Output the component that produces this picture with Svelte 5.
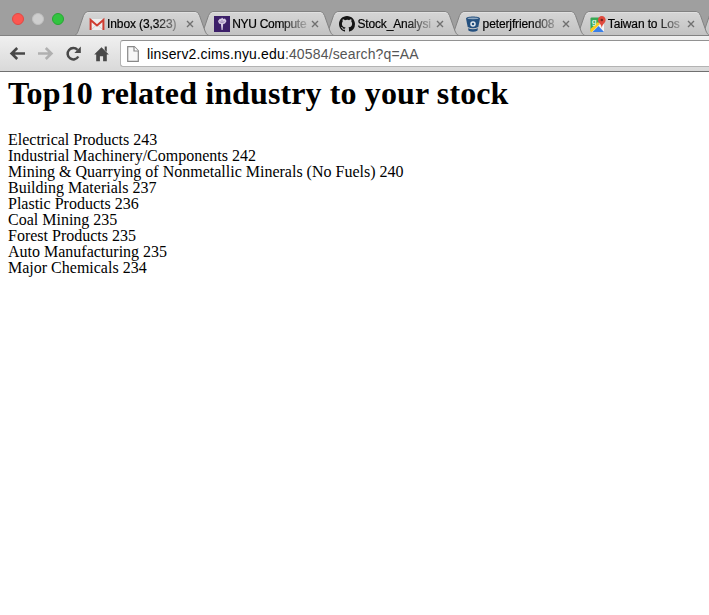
<script>
  const tabs = [
    { title: 'Inbox (3,323)', icon: 'gmail', spacing: -0.1 },
    { title: 'NYU Compute', icon: 'nyu', spacing: -0.3 },
    { title: 'Stock_Analysi', icon: 'github', spacing: -0.15 },
    { title: 'peterjfriend08', icon: 'bucket', spacing: -0.12 },
    { title: 'Taiwan to Los', icon: 'maps', spacing: -0.12 },
    { title: '', icon: '', spacing: 0 }
  ];
  const industries = [
    ['Electrical Products', 243],
    ['Industrial Machinery/Components', 242],
    ['Mining & Quarrying of Nonmetallic Minerals (No Fuels)', 240],
    ['Building Materials', 237],
    ['Plastic Products', 236],
    ['Coal Mining', 235],
    ['Forest Products', 235],
    ['Auto Manufacturing', 235],
    ['Major Chemicals', 234]
  ];
</script>

<div class="window">
  <header class="strip">
    <div class="lights">
      <span class="light red"></span><span class="light grey"></span><span class="light green"></span>
    </div>
    <div class="tabs">
      {#each tabs as tab, i}
        <div class="tab" style:z-index={10 - i}>
          <svg class="shape" width="135" height="25" viewBox="0 0 135 25">
            <defs>
              <linearGradient id="tabfill{i}" x1="0" y1="0" x2="0" y2="1">
                <stop offset="0" stop-color="#d6d6d6" /><stop offset="1" stop-color="#c2c2c2" />
              </linearGradient>
            </defs>
            <path d="M0 24.500C1.500 23.500 2 22.500 3 20.500L8.500 4.500Q10 .5 13 .5H120Q123 .5 124.500 4.500L130 20C131.500 23.500 133 24.500 134.500 24.500Z" fill="url(#tabfill{i})" stroke="#828282" />
            <path d="M11 3Q12 1.500 13.500 1.500H120Q121.500 1.500 122.500 3" fill="none" stroke="#e0e0e0" />
          </svg>
          {#if tab.icon}
            <svg class="icon" width="16" height="16" viewBox="0 0 16 16">
              {#if tab.icon === 'gmail'}
                <path d="M1 3H15V14H1Z" fill="#eee" />
                <path d="M3 13L8 8.500L13 13" fill="none" stroke="#d3d3d3" />
                <path d="M1.600 14V4L8 9.500L14.400 4V14" fill="none" stroke="#cf3d31" stroke-width="2" />
              {:else if tab.icon === 'nyu'}
                <rect width="16" height="16" fill="#3c1f69" />
                <path d="M4 5L6 2.500L7 3L8 1.500L9.500 3L11 2.500L12.500 5L11 7.500L9.200 8L8.600 14H7.600L6.900 8L5 7.500Z" fill="#d7cce5" />
                <path d="M5.500 5L7.500 7M10.500 5L8.500 7M8 4V7" stroke="#8067a0" stroke-width=".7" fill="none" />
              {:else if tab.icon === 'github'}
                <path fill="#151515" d="M8 0C3.580 0 0 3.580 0 8c0 3.540 2.290 6.530 5.470 7.590.4.070.55-.17.55-.38 0-.19-.01-.82-.01-1.490-2.010.37-2.530-.49-2.690-.94-.09-.23-.48-.94-.82-1.130-.28-.15-.68-.52-.01-.53.63-.01 1.080.58 1.230.82.72 1.210 1.870.87 2.330.66.07-.52.28-.87.51-1.070-1.780-.2-3.640-.89-3.640-3.950 0-.87.31-1.590.82-2.150-.08-.2-.36-1.020.08-2.120 0 0 .67-.21 2.200.82A7.600 7.600 0 0 1 8 3.860c.68 0 1.360.09 2 .27 1.530-1.040 2.200-.82 2.200-.82.44 1.100.16 1.920.08 2.120.51.56.82 1.270.82 2.150 0 3.070-1.870 3.750-3.650 3.950.29.25.54.73.54 1.480 0 1.070-.01 1.930-.01 2.200 0 .21.15.46.55.38A8.010 8.010 0 0 0 16 8c0-4.420-3.580-8-8-8z" />
              {:else if tab.icon === 'bucket'}
                <path d="M1 2.500C1 -.3 15 -.3 15 2.500L13.300 11Q8 13.500 2.700 11Z" fill="#24507f" />
                <path d="M3 12.200Q8 14.400 13 12.200L12.400 14.700Q8 16.700 3.600 14.700Z" fill="#24507f" />
                <ellipse cx="8" cy="2.300" rx="5.500" ry=".9" fill="#91a9c1" />
                <circle cx="8" cy="8" r="2" fill="#24507f" stroke="#e2e8ee" stroke-width="1.500" />
              {:else if tab.icon === 'maps'}
                <path d="M1 2H11L14 9V16H1Z" fill="#f4f4f4" />
                <path d="M.5 2.500Q.5 1.500 1.500 1.500H10L9 7L.5 15Z" fill="#36a852" />
                <path d="M.5 13L8 6L10 8L2 16H.5Z" fill="#fbcb20" />
                <path d="M2.500 16L8.500 10L14 16Z" fill="#397fe8" />
                <text x="1.800" y="8" class="g">g</text>
                <path d="M11.800 0A3.800 3.800 0 0 1 15.600 4C15.600 7 12.400 7.500 11.800 12C11.200 7.500 8 7 8 4A3.800 3.800 0 0 1 11.800 0Z" fill="#e04a3d" />
                <circle cx="11.800" cy="4" r="1.300" fill="#76251f" />
              {/if}
            </svg>
            <span class="title" style:letter-spacing="{tab.spacing}px">{tab.title}</span>
            <svg class="close" width="8" height="8" viewBox="0 0 8 8"><path d="M1 1L7 7M7 1L1 7" stroke="#707070" stroke-width="1.400" /></svg>
          {/if}
        </div>
      {/each}
    </div>
  </header>
  <nav class="toolbar">
    <svg class="nav" width="17" height="16" viewBox="0 0 17 16"><path d="M16 7.500H3M8.200 2L2.600 7.500L8.200 13" fill="none" stroke="#484848" stroke-width="2.600" /></svg>
    <svg class="nav" width="17" height="16" viewBox="0 0 17 16"><path d="M1 7.500H14M8.800 2L14.400 7.500L8.800 13" fill="none" stroke="#b0b0b0" stroke-width="2.600" /></svg>
    <svg class="nav" width="17" height="16" viewBox="0 0 17 16"><path d="M13.300 10.500A5.700 5.700 0 1 1 12.500 3.800" fill="none" stroke="#484848" stroke-width="2.500" /><path d="M15.800 .6V7H9.400Z" fill="#484848" /></svg>
    <svg class="nav" width="17" height="16" viewBox="0 0 17 16"><path d="M8.500 1.200L15.800 8.500H13.800V15.200H10.100V10.200H6.900V15.200H3.200V8.500H1.200Z" fill="#484848" /><path d="M11.700 .5H13.800V6L11.700 4Z" fill="#484848" /></svg>
    <div class="address">
      <svg width="12" height="16" viewBox="0 0 12 16"><path d="M.7.700H7.300L11.300 4.700V15.300H.7Z" fill="#f7f7f7" stroke="#888" stroke-width="1.200" /><path d="M7 .7V5H11.300" fill="#fff" stroke="#888" stroke-width="1.200" /></svg>
      <span class="url">linserv2.cims.nyu.edu<span class="path">:40584/search?q=AA</span></span>
    </div>
  </nav>
  <main>
    <h1>Top10 related industry to your stock</h1>
    {#each industries as [name, count]}
      <div class="row">{name} {count}</div>
    {/each}
  </main>
</div>

<style>
  :global(body) { background: #fff; overflow: hidden; }
  .window { width: 709px; height: 615px; overflow: hidden; }
  .strip { height: 36px; box-sizing: border-box; display: flex; background: #9f9f9f; border-bottom: 1px solid #828282; }
  .lights { display: flex; gap: 8px; padding: 13px 0 0 12px; width: 63px; flex: none; }
  .light { width: 12px; height: 12px; border-radius: 50%; box-sizing: border-box; }
  .red { background: #fc5650; border: 1px solid #df4944; }
  .grey { background: #cecece; border: 1px solid #c0c0c0; }
  .green { background: #32c440; border: 1px solid #27a633; }
  .tabs { display: flex; padding-top: 11px; height: 24px; }
  .tab { position: relative; width: 135px; height: 24px; margin-right: -9.800px; flex: none; display: flex; align-items: center; box-sizing: border-box; padding-left: 14px; }
  .shape { position: absolute; left: 0; top: 0; }
  .icon { position: relative; flex: none; margin-top: 2px; }
  .g { font: bold 8px "Liberation Sans", Arial, sans-serif; fill: #dff3e3; }
  .title { position: relative; margin: 1px 0 0 2px; width: 76px; flex: none; white-space: nowrap; font: 12px/16px "Liberation Sans", Arial, sans-serif; color: #000; -webkit-text-stroke: .2px #000; mask-image: linear-gradient(to right, #000 48px, transparent 80px); }
  .close { position: relative; flex: none; margin: 2px 0 0 3px; }
  .toolbar { height: 36px; box-sizing: border-box; display: flex; align-items: center; padding-left: 9px; gap: 11px; background: linear-gradient(#f0f0f0, #d9d9d9); border-bottom: 1px solid #707070; }
  .nav { flex: none; }
  .address { flex: 1; height: 27px; box-sizing: border-box; display: flex; align-items: center; gap: 8px; margin-left: -1px; padding-left: 6px; background: #fff; border: 1px solid #b3b3b3; border-top-color: #929292; border-right: 0; border-radius: 3px 0 0 3px; }
  .url { font: 14px/18px "Liberation Sans", Arial, sans-serif; letter-spacing: .155px; color: #000; white-space: nowrap; }
  .path { color: #555; }
  main { padding: 3px 8px; font: 16px/16px "Liberation Serif", "Times New Roman", serif; color: #000; }
  h1 { margin: 0 0 20px; font-size: 32px; line-height: 37px; font-weight: bold; letter-spacing: .115px; white-space: nowrap; }
  .row { height: 16px; white-space: nowrap; }
</style>
